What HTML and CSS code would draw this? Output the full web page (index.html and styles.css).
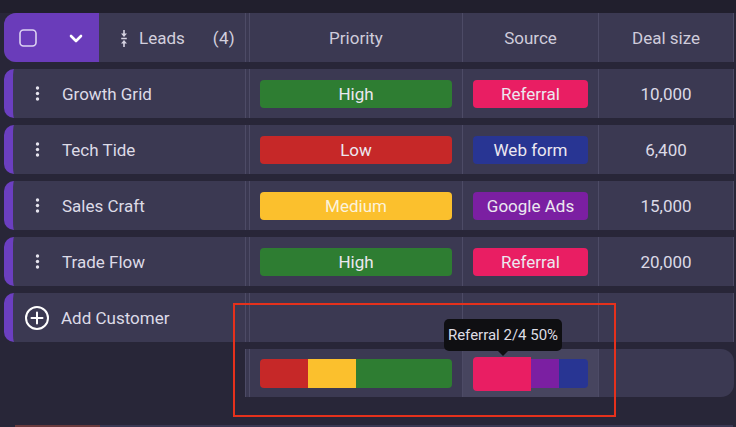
FILE: index.html
```html
<!DOCTYPE html>
<html>
<head>
<meta charset="utf-8">
<link rel="stylesheet" href="styles.css">
</head>
<body>
<div class="topstrip"></div>
<div class="table">
  <div class="row header">
    <div class="lead lead-head">
      <div class="select">
        <svg class="checkbox" width="18" height="18" viewBox="0 0 18 18"><rect x="1" y="1" width="16" height="16" rx="3.5" fill="none" stroke="#dcd2f2" stroke-width="1.6"/></svg>
        <svg class="chev" width="14" height="9" viewBox="0 0 14 9"><path d="M2 2 L7 7 L12 2" fill="none" stroke="#ffffff" stroke-width="2.6" stroke-linecap="round" stroke-linejoin="round"/></svg>
      </div>
      <div class="leads-title">
        <svg class="sort" width="8" height="17" viewBox="0 0 8 17"><path d="M4 0 V4" stroke="#d6d3e2" stroke-width="1.6"/><path d="M1 3.5 H7 L4 7 Z" fill="#d6d3e2"/><path d="M1.2 8.5 H6.8" stroke="#d6d3e2" stroke-width="1.4"/><path d="M1 13.5 H7 L4 10 Z" fill="#d6d3e2"/><path d="M4 13 V17" stroke="#d6d3e2" stroke-width="1.6"/></svg>
        <span class="leads-label">Leads</span>
        <span class="count">(4)</span>
      </div>
    </div>
    <div class="spacer"></div>
    <div class="cell prio head-cell">Priority</div>
    <div class="cell src head-cell">Source</div>
    <div class="cell deal head-cell">Deal size</div>
  </div>

  <div class="row">
    <div class="lead accent"><svg class="kebab" width="5" height="15" viewBox="0 0 5 15"><circle cx="2.5" cy="2" r="1.7"/><circle cx="2.5" cy="7.5" r="1.7"/><circle cx="2.5" cy="13" r="1.7"/></svg><span class="name">Growth Grid</span></div>
    <div class="spacer"></div>
    <div class="cell prio"><div class="pill green">High</div></div>
    <div class="cell src"><div class="pill pink">Referral</div></div>
    <div class="cell deal">10,000</div>
  </div>

  <div class="row">
    <div class="lead accent"><svg class="kebab" width="5" height="15" viewBox="0 0 5 15"><circle cx="2.5" cy="2" r="1.7"/><circle cx="2.5" cy="7.5" r="1.7"/><circle cx="2.5" cy="13" r="1.7"/></svg><span class="name">Tech Tide</span></div>
    <div class="spacer"></div>
    <div class="cell prio"><div class="pill red">Low</div></div>
    <div class="cell src"><div class="pill blue">Web form</div></div>
    <div class="cell deal">6,400</div>
  </div>

  <div class="row">
    <div class="lead accent"><svg class="kebab" width="5" height="15" viewBox="0 0 5 15"><circle cx="2.5" cy="2" r="1.7"/><circle cx="2.5" cy="7.5" r="1.7"/><circle cx="2.5" cy="13" r="1.7"/></svg><span class="name">Sales Craft</span></div>
    <div class="spacer"></div>
    <div class="cell prio"><div class="pill yellow">Medium</div></div>
    <div class="cell src"><div class="pill purple">Google Ads</div></div>
    <div class="cell deal">15,000</div>
  </div>

  <div class="row">
    <div class="lead accent"><svg class="kebab" width="5" height="15" viewBox="0 0 5 15"><circle cx="2.5" cy="2" r="1.7"/><circle cx="2.5" cy="7.5" r="1.7"/><circle cx="2.5" cy="13" r="1.7"/></svg><span class="name">Trade Flow</span></div>
    <div class="spacer"></div>
    <div class="cell prio"><div class="pill green">High</div></div>
    <div class="cell src"><div class="pill pink">Referral</div></div>
    <div class="cell deal">20,000</div>
  </div>

  <div class="row">
    <div class="lead accent add"><svg class="plus" width="26" height="26" viewBox="0 0 26 26"><circle cx="13" cy="13" r="11" fill="none" stroke="#ffffff" stroke-width="2"/><path d="M13 7.5 V18.5 M7.5 13 H18.5" stroke="#ffffff" stroke-width="2" stroke-linecap="round"/></svg><span class="name">Add Customer</span></div>
    <div class="spacer"></div>
    <div class="cell prio"></div>
    <div class="cell src"></div>
    <div class="cell deal"></div>
  </div>

  <div class="row summary">
    <div class="sum-empty"></div>
    <div class="sum-body">
      <div class="spacer"></div>
      <div class="cell prio">
        <div class="bar">
          <div class="seg red" style="flex-grow:1"></div>
          <div class="seg yellow" style="flex-grow:1"></div>
          <div class="seg green" style="flex-grow:2"></div>
        </div>
      </div>
      <div class="cell src hover">
        <div class="bar">
          <div class="seg pink active" style="flex-grow:2"></div>
          <div class="seg purple" style="flex-grow:1"></div>
          <div class="seg blue" style="flex-grow:1"></div>
        </div>
        <div class="tooltip">Referral 2/4 50%</div>
      </div>
      <div class="cell deal last"></div>
    </div>
  </div>

  <div class="bottom-strip"><div class="strip-brown"></div><div class="strip-rest"></div></div>
</div>
<div class="annotation"></div>
</body>
</html>
```
FILE: styles.css
```css
* { box-sizing: border-box; }
html, body { margin: 0; padding: 0; }
body {
  width: 736px;
  height: 427px;
  overflow: hidden;
  background: #282638;
  font-family: Roboto, "Liberation Sans", sans-serif;
  color: #dddbe7;
  position: relative;
}
.topstrip { height: 13px; background: #211f2d; }
.table {
  padding-left: 4px;
  display: flex;
  flex-direction: column;
  gap: 7px;
  width: 734px;
}
.row {
  display: flex;
  height: 49px;
  flex: none;
}
.lead {
  width: 242px;
  flex: none;
  background: #3b3952;
  border-right: 1px solid #4d4b66;
  display: flex;
  align-items: center;
  border-radius: 10px 0 0 10px;
}
.lead.accent {
  border-left: 9px solid #6b3fc0;
}
.lead-head { overflow: hidden; border-radius: 12px 0 0 12px; }
.select {
  width: 95px;
  height: 100%;
  background: #6a3cba;
  display: flex;
  align-items: center;
  flex: none;
}
.checkbox { margin-left: 15px; }
.chev { margin-left: 32px; margin-top: 1px; }
.leads-title {
  flex: 1;
  display: flex;
  align-items: center;
  height: 100%;
  padding-left: 21px;
  padding-right: 10px;
  font-size: 17px;
  color: #d3d0de;
}
.sort { margin-right: 11px; margin-top: 1px; }
.leads-label { flex: 1; }
.count { letter-spacing: 0.3px; }
.spacer {
  width: 3px;
  flex: none;
  background: #3b3952;
}
.cell {
  flex: none;
  background: #3b3952;
  border-left: 1px solid #4d4b66;
  display: flex;
  align-items: center;
  justify-content: center;
  padding: 0 10px;
  font-size: 17px;
  position: relative;
}
.prio { width: 213px; }
.src { width: 136px; }
.deal { width: 136px; border-right: 1px solid #4d4b66; color: #dcdae6; }
.head-cell { color: #cfccdb; }
.kebab { fill: #e6e4ee; margin-left: 22px; flex: none; }
.name { margin-left: 22px; font-size: 17px; color: #dddbe7; }
.add .plus { margin-left: 11px; flex: none; }
.add .name { margin-left: 11px; }
.pill {
  width: 100%;
  height: 28px;
  border-radius: 4px;
  display: flex;
  align-items: center;
  justify-content: center;
  font-size: 17px;
  color: #ece8f0;
}
.green { background: #2e7d32; }
.red { background: #c62828; }
.yellow { background: #fbc02d; color: #fbf3dc; }
.pink { background: #e91e63; }
.blue { background: #283593; }
.purple { background: #7b1fa2; }

.summary { height: 48px; }
.sum-empty { width: 241px; flex: none; }
.sum-body {
  display: flex;
  background: #3b3952;
  border-radius: 0 13px 13px 0;
  border-left: 1px solid #4d4b66;
  width: 489px;
  flex: none;
}
.sum-body .spacer { width: 3px; }
.sum-body .cell { height: 100%; }
.sum-body .last { border-right: none; background: transparent; width: 135px; }
.hover { background: #47455f; }
.bar {
  width: 100%;
  height: 29px;
  display: flex;
  align-items: center;
  border-radius: 4px;
}
.seg { height: 29px; flex-basis: 0; }
.seg:first-child { border-radius: 4px 0 0 4px; }
.seg:last-child { border-radius: 0 4px 4px 0; }
.seg.active { height: 34px; margin-top: 1px; }
.tooltip {
  position: absolute;
  left: -19px;
  top: -30px;
  width: 118px;
  height: 32px;
  background: #0f0f12;
  border-radius: 5px;
  color: #dedde4;
  font-size: 15px;
  display: flex;
  align-items: center;
  justify-content: center;
  z-index: 2;
}
.tooltip::after {
  content: "";
  position: absolute;
  left: 53px;
  bottom: -5px;
  border-left: 6px solid transparent;
  border-right: 6px solid transparent;
  border-top: 6px solid #0f0f12;
}
.bottom-strip {
  display: flex;
  height: 4px;
  margin-top: 21px;
  padding-left: 11px;
  flex: none;
}
.strip-brown { width: 85px; background: #6a3a3d; }
.strip-rest { width: 633px; background: #3a3853; }
.annotation {
  position: absolute;
  left: 233px;
  top: 303px;
  width: 383px;
  height: 114px;
  border: 2px solid #e5311c;
  pointer-events: none;
  z-index: 3;
}
```
